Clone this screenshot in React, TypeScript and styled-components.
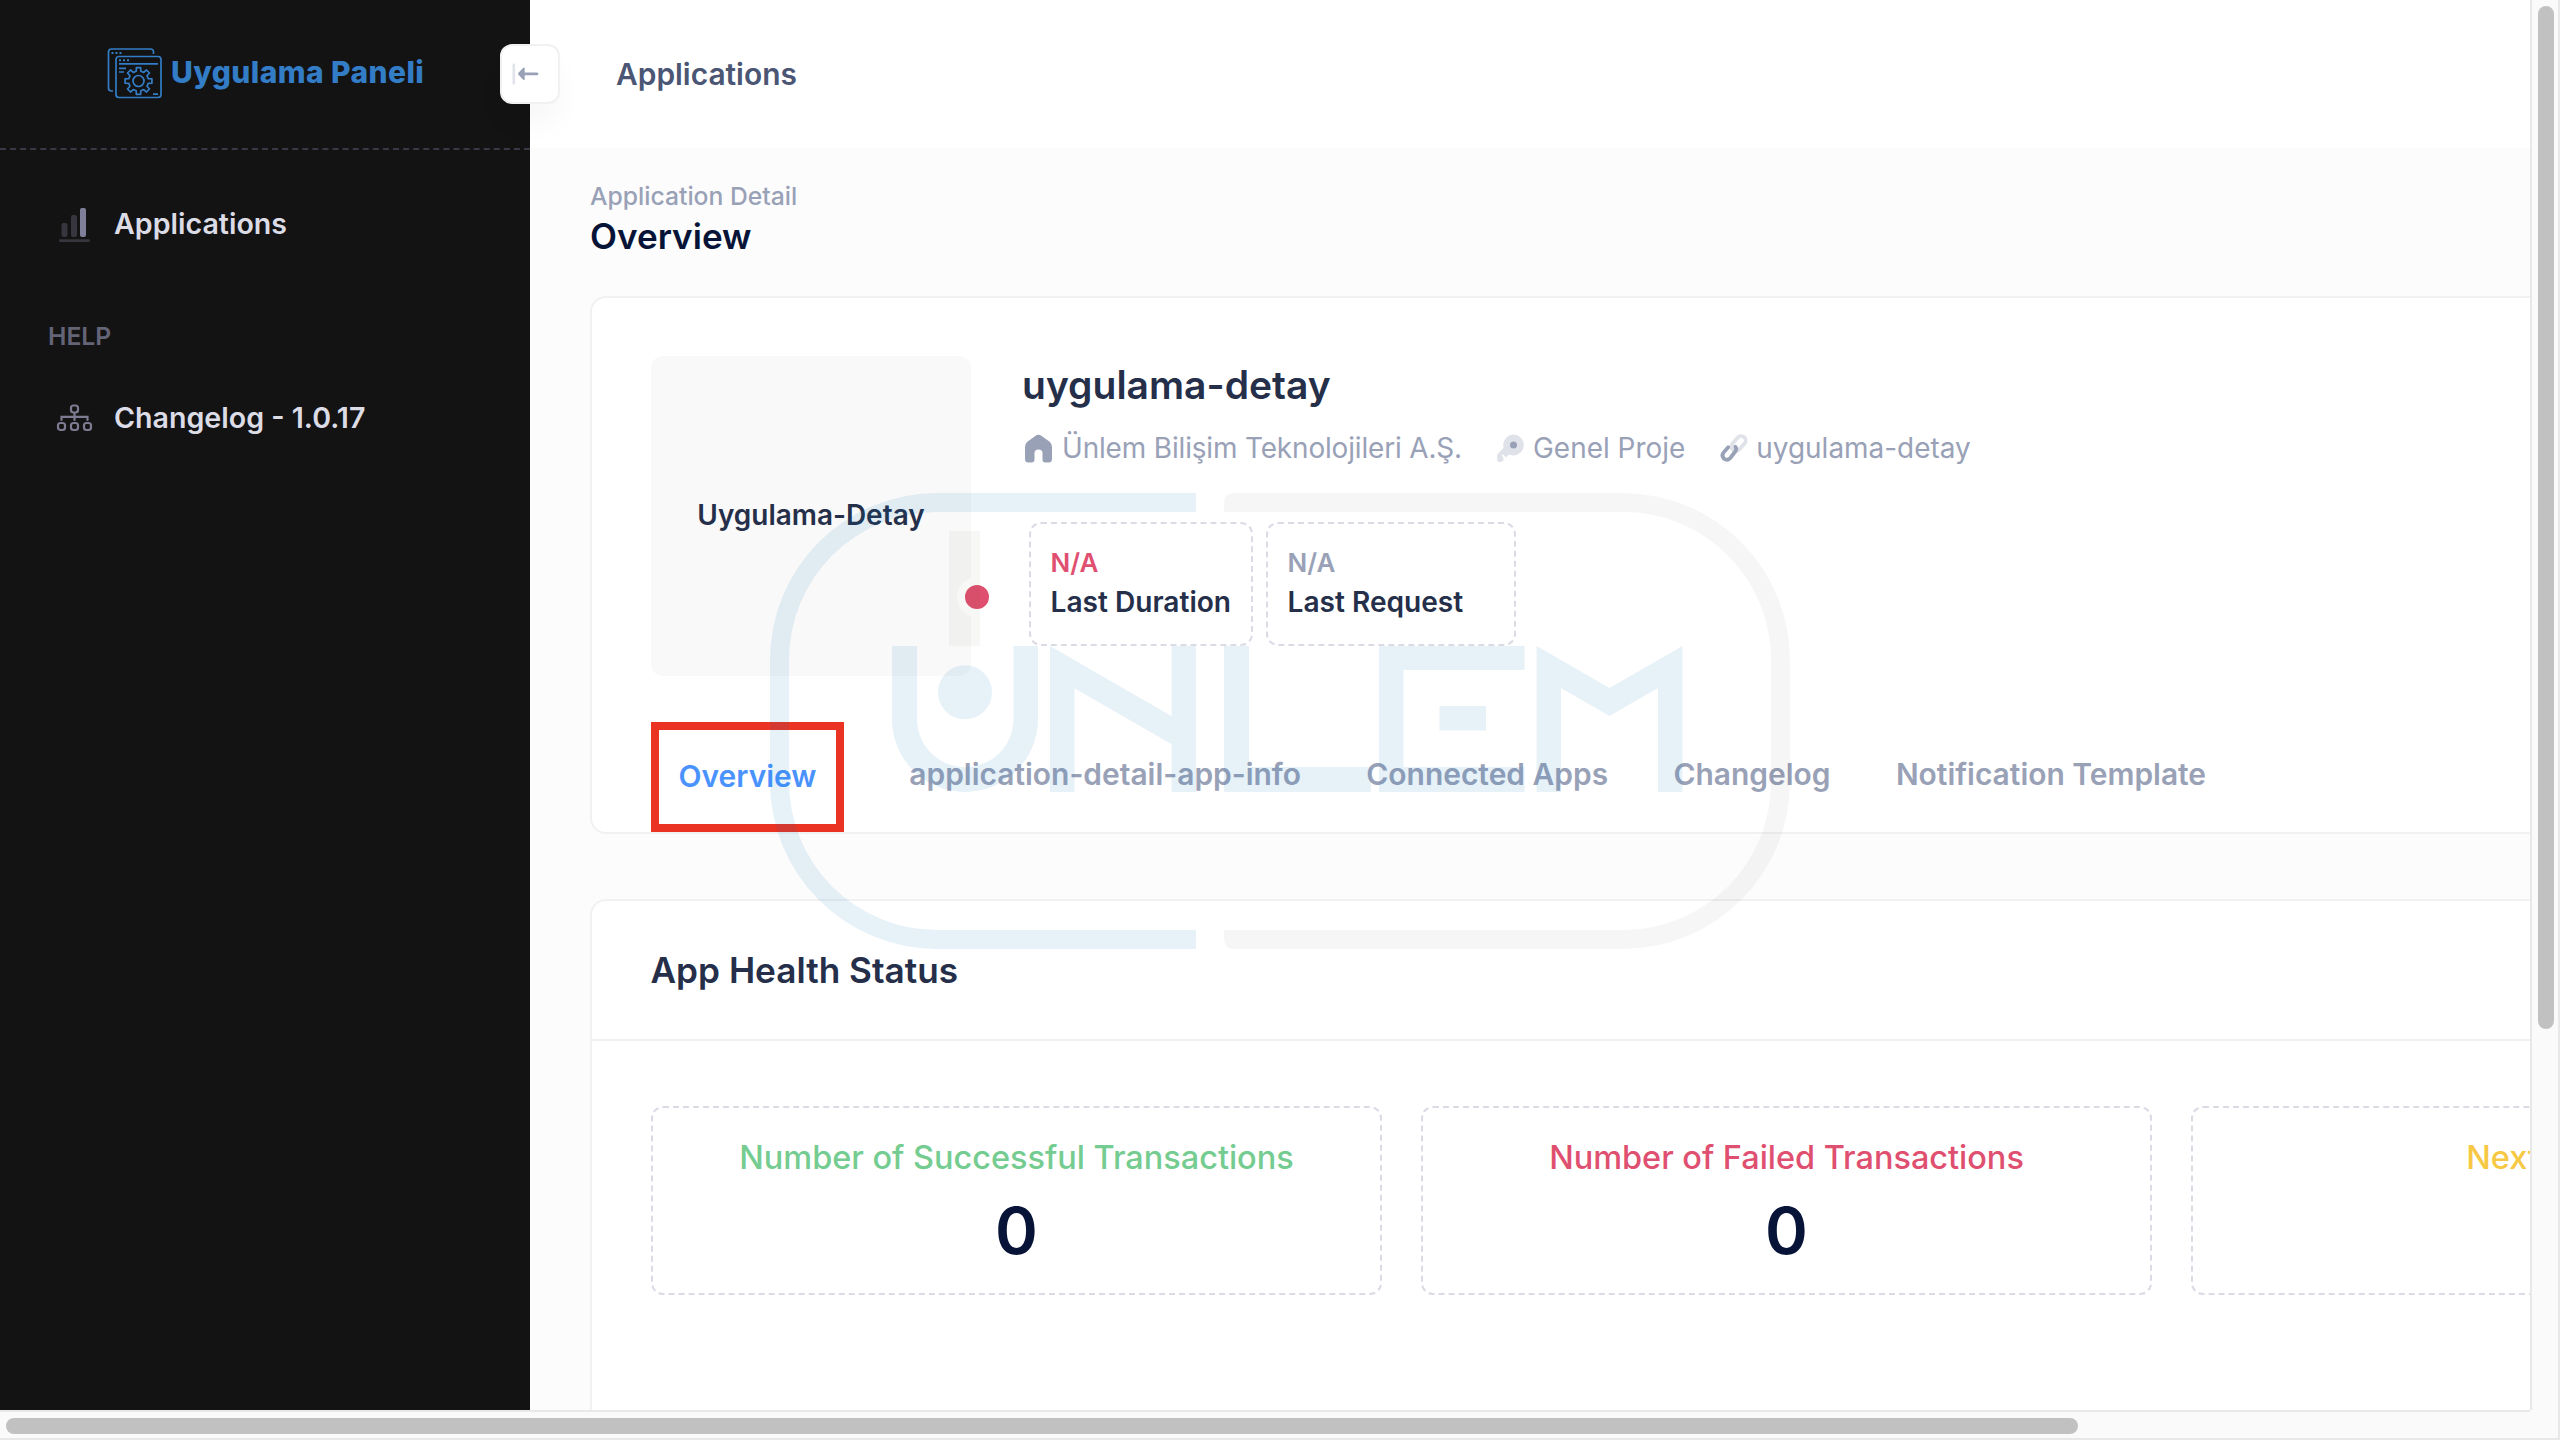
import React from "react";
import styled, { createGlobalStyle, css } from "styled-components";

const GlobalStyle = createGlobalStyle`
  * { box-sizing: border-box; }
  body {
    margin: 0;
    overflow: hidden;
    background: #fafafa;
    font-family: Inter, "Noto Sans", sans-serif;
    -webkit-font-smoothing: antialiased;
  }
`;

const Screen = styled.div`
  display: grid;
  grid-template-columns: 1fr 30px;
  grid-template-rows: 1fr 30px;
  width: 2560px;
  height: 1440px;
  overflow: hidden;
`;

const Viewport = styled.div`
  position: relative;
  display: flex;
  overflow: hidden;
  background: #fcfcfc;
`;

const Sidebar = styled.aside`
  flex: 0 0 530px;
  display: flex;
  flex-direction: column;
  background: #131313;
`;

const Brand = styled.div`
  position: relative;
  height: 150px;
  padding: 0 0 4px 107px;
  display: flex;
  align-items: center;
  gap: 8px;
  border-bottom: 2px dashed #393945;
  color: #337dc6;

  > svg {
    margin-top: 4px;
  }
`;

const BrandName = styled.span`
  font-size: 30px;
  line-height: 40px;
  font-weight: 800;
  letter-spacing: 0.42px;
  white-space: nowrap;
`;

const Toggle = styled.button`
  position: absolute;
  z-index: 2;
  top: 44px;
  right: -30px;
  width: 60px;
  height: 60px;
  padding: 0;
  border: 2px solid #f1f1f2;
  border-radius: 12px;
  background: #fff;
  box-shadow: 0 20px 28px rgba(0, 0, 0, 0.03);
  display: flex;
  align-items: center;
  justify-content: center;
`;

const Nav = styled.nav`
  display: flex;
  flex-direction: column;
  padding: 50px 0 0 50px;
`;

const NavItem = styled.a`
  display: flex;
  align-items: center;
  height: 48px;
  gap: 15px;
  font-size: 28.6px;
  font-weight: 600;
  color: #dcdce6;
  white-space: nowrap;
`;

const NavLabel = styled.span`
  padding-bottom: 2px;
`;

const NavHeading = styled.div`
  height: 48px;
  margin: 64px 0 34px -2px;
  line-height: 48px;
  font-size: 24.7px;
  font-weight: 600;
  color: #646477;
`;

const NavIcon = styled.svg`
  flex: 0 0 49px;
  height: 44px;
`;

const Main = styled.main`
  flex: 1;
  min-width: 0;
  display: flex;
  flex-direction: column;
`;

const Topbar = styled.header`
  flex: 0 0 148px;
  display: flex;
  align-items: center;
  padding-left: 86px;
  background: #fff;
  font-size: 29.9px;
  font-weight: 600;
  color: #4b5675;
`;

const Content = styled.div`
  display: flex;
  flex-direction: column;
  padding: 30px 0 0 60px;
`;

const Crumb = styled.div`
  height: 36px;
  line-height: 36px;
  font-size: 24.7px;
  font-weight: 500;
  color: #99a1b7;
`;

const PageTitle = styled.h1`
  margin: 0;
  height: 46px;
  line-height: 44px;
  font-size: 35.1px;
  font-weight: 600;
  color: #071437;
`;

const Card = styled.section<{ $height: number }>`
  width: 2440px;
  height: ${(p) => p.$height}px;
  border: 2px solid #f1f1f2;
  border-radius: 16px;
  background: #fff;
`;

const DetailCard = styled(Card)`
  margin-top: 36px;
  padding: 58px 0 0 59px;
  display: flex;
  flex-direction: column;
  justify-content: space-between;
`;

const Profile = styled.div`
  display: flex;
  gap: 52px;
`;

const Avatar = styled.div`
  position: relative;
  flex: 0 0 320px;
  height: 320px;
  padding-bottom: 2px;
  display: flex;
  align-items: center;
  justify-content: center;
  border-radius: 12px;
  background: #f9f9f9;
  font-size: 27.95px;
  font-weight: 600;
  color: #252f4a;
`;

const StatusDot = styled.span`
  position: absolute;
  right: -26px;
  bottom: 59px;
  width: 40px;
  height: 40px;
  border: 8px solid #fff;
  border-radius: 50%;
  background: #df5070;
`;

const Info = styled.div`
  display: flex;
  flex-direction: column;
`;

const AppName = styled.h2`
  margin: 3px 0 0 -1px;
  height: 53px;
  line-height: 52px;
  font-size: 39px;
  font-weight: 600;
  color: #252f4a;
`;

const MetaRow = styled.div`
  display: flex;
  align-items: center;
  height: 42px;
  margin-top: 15px;
  gap: 33px;
`;

const Meta = styled.span`
  display: flex;
  align-items: center;
  gap: 7px;
  font-size: 27.95px;
  font-weight: 400;
  color: #99a1b7;
  white-space: nowrap;

  svg {
    flex: none;
    width: 31px;
    height: 31px;
  }

  &:first-child {
    letter-spacing: -0.15px;
    gap: 8px;
  }
`;

const Facts = styled.div`
  display: flex;
  gap: 13px;
  margin: 53px 0 0 6px;
`;

const dashedBox = css`
  border: 2px dashed #dbdbe6;
  border-radius: 12px;
`;

const Fact = styled.div<{ $width: number }>`
  ${dashedBox}
  width: ${(p) => p.$width}px;
  height: 124px;
  padding: 19px 0 0 19.5px;
  white-space: nowrap;
`;

const FactValue = styled.div<{ $color: string }>`
  height: 39px;
  line-height: 39px;
  font-size: 26px;
  font-weight: 600;
  color: ${(p) => p.$color};
`;

const FactLabel = styled.div`
  height: 40px;
  line-height: 41px;
  font-size: 28.1px;
  font-weight: 600;
  color: #252f4a;
`;

const Tabs = styled.div`
  display: flex;
  align-items: center;
  gap: 65.3px;
  height: 110px;
`;

const Tab = styled.a<{ $active?: boolean }>`
  font-size: 29.95px;
  font-weight: 600;
  line-height: 40px;
  white-space: nowrap;
  color: #99a1b7;
  padding-bottom: 6px;

  ${(p) =>
    p.$active &&
    css`
      display: flex;
      align-items: center;
      justify-content: center;
      width: 193px;
      height: 110px;
      padding: 0 0 2px;
      border: 8px solid #ea3323;
      color: #4a93ff;
    `}
`;

const HealthCard = styled(Card)`
  margin-top: 65px;
  border-bottom: 0;
`;

const CardHeader = styled.div`
  height: 140px;
  padding: 0 0 0 58.5px;
  display: flex;
  align-items: center;
  border-bottom: 2px solid #f1f1f2;
  font-size: 35.2px;
  font-weight: 600;
  color: #252f4a;
`;

const StatGrid = styled.div`
  display: grid;
  grid-template-columns: repeat(3, 731px);
  gap: 39px;
  padding: 65px 0 0 59px;
`;

const Stat = styled.div`
  ${dashedBox}
  height: 189px;
  padding-top: 26px;
  text-align: center;
`;

const StatLabel = styled.div<{ $color: string }>`
  height: 48px;
  line-height: 48px;
  font-size: 32.5px;
  font-weight: 500;
  letter-spacing: -0.03px;
  color: ${(p) => p.$color};
`;

const StatValue = styled.div`
  height: 98px;
  line-height: 98px;
  font-size: 65px;
  font-weight: 600;
  color: #071437;
`;

const VTrack = styled.div`
  padding: 6px 4px 0 6px;
  border: solid #e8e8e8;
  border-width: 0 2px;
  background: #fafafa;
`;

const VThumb = styled.div`
  width: 16px;
  height: 1023px;
  border-radius: 8px;
  background: #c1c1c1;
`;

const HTrack = styled.div`
  padding: 6px 0 0 6px;
  border: solid #e8e8e8;
  border-width: 2px 0;
  background: #fafafa;
`;

const HThumb = styled.div`
  width: 2072px;
  height: 16px;
  border-radius: 8px;
  background: #c1c1c1;
`;

const Corner = styled.div`
  border: solid #e8e8e8;
  border-width: 0 2px 2px 0;
  background: #fafafa;
`;

const Watermark = styled.svg`
  position: absolute;
  left: 770px;
  top: 493px;
  width: 1021px;
  height: 457px;
  pointer-events: none;
`;

function gearPath(cx: number, cy: number, teeth: number, outer: number, inner: number) {
  const step = (Math.PI * 2) / teeth;
  const pts: string[] = [];
  for (let i = 0; i < teeth; i++) {
    const a = i * step - Math.PI / 2;
    const corners: [number, number][] = [
      [-0.3, inner],
      [-0.2, outer],
      [0.2, outer],
      [0.3, inner],
    ];
    corners.forEach(([o, r]) => {
      pts.push(`${(cx + r * Math.cos(a + o * step)).toFixed(2)} ${(cy + r * Math.sin(a + o * step)).toFixed(2)}`);
    });
  }
  return `M${pts.join("L")}Z`;
}

const BrandIcon = () => (
  <svg width="56" height="52" viewBox="0 0 56 52" fill="none" stroke="currentColor" strokeWidth="1.7" strokeLinejoin="round">
    <path d="M46.500 6V4q0-3-3-3H4.500q-3 0-3 3V40q0 3 3 3H6" />
    <rect x="9" y="8.500" width="45" height="41" rx="3" />
    <path d="M4.500 5h2m2 0h2m2 0h2M12 12.200h2m2 0h2m2 0h2" strokeWidth="2" />
    <path d="M12 15.800h39M12 20.300h7M12 24h5M46 46.200h5" />
    <path d={gearPath(31.5, 33, 8, 13.6, 10)} />
    <circle cx="31.500" cy="33" r="5.500" />
  </svg>
);

const ToggleIcon = () => (
  <svg width="40" height="40" viewBox="0 0 40 40" fill="#99a1b7">
    <rect x="2.500" y="9.500" width="2.600" height="21" rx="1.300" opacity="0.3" />
    <path d="M8.500 18.800 13 14q1.700-1.400 1.700.8v3.600H27q1.500.2 1.500 1.400T27 21.200H14.700v3.600q0 2.200-1.700.8L8.500 20.800q-.9-1 0-2Z" />
  </svg>
);

const BarsIcon = () => (
  <NavIcon width="49" height="44" viewBox="0 0 49 44">
    <g fill="#37363f">
      <rect x="11.500" y="21" width="6" height="14" rx="2" />
      <rect x="21" y="13" width="6" height="22" rx="2" />
      <rect x="9" y="37.200" width="31" height="2.800" rx="1.400" />
    </g>
    <rect x="30" y="6" width="6" height="29" rx="2" fill="#7f7f99" />
  </NavIcon>
);

const TreeIcon = () => (
  <NavIcon width="49" height="44" viewBox="0 0 49 44" fill="none" stroke="#7c7b91" strokeWidth="2.2">
    <rect x="21" y="9.500" width="7" height="7" rx="2.500" />
    <rect x="8" y="27" width="7" height="7" rx="2.500" />
    <rect x="21" y="27" width="7" height="7" rx="2.500" />
    <rect x="34" y="27" width="7" height="7" rx="2.500" />
    <path d="M24.500 17v7M11.500 24v-3.200h26V24" strokeLinecap="round" />
  </NavIcon>
);

const HomeIcon = () => (
  <svg viewBox="0 0 31 31" fill="#99a1b7">
    <path d="M2 14q0-3 2.300-5.200L12.300 3q3.200-2.400 6.400 0l8 5.800Q29 11 29 14v12q0 3.500-3.500 3.500h-3q-3 0-3-3V20q0-3.500-4-3.500T11.500 20v6.500q0 3-3 3h-3q-3.500 0-3.500-3.500Z" />
  </svg>
);

const KeyIcon = () => (
  <svg viewBox="0 0 31 31">
    <g fill="#e0e2ea">
      <circle cx="18.500" cy="12" r="10.400" />
      <path d="M11 12.500 2.800 20.700q-1.600 2-.3 4l-.3 1.600q-.2 2.600 2.600 2.800 2 .2 3.400-1.500 1-1.600 0-2.800l-1.200-2q-.2-1.600 1.200-1.400l2.600 2.800 7.200-6Z" />
    </g>
    <circle cx="18.500" cy="12" r="3.500" fill="#99a1b7" />
  </svg>
);

const LinkIcon = () => (
  <svg viewBox="0 0 31 31" fill="none" strokeWidth="3.8">
    <rect x="12" y="6" width="17" height="9" rx="4.500" transform="rotate(-48 20.500 10.500)" stroke="#e0e2ea" />
    <path d="M17.300 13.800q2 2.400-.2 5L12.300 25q-3 3.200-6.200.8-3-3-.6-6.200l4.700-5.400" stroke="#99a1b7" strokeLinecap="round" />
  </svg>
);

const UnlemWatermark = () => (
  <Watermark viewBox="770 493 1021 457">
    <g fill="#0074b5" fillOpacity="0.098">
      <path d="M1196 493H937A167 167 0 0 0 770 660V782A167 167 0 0 0 937 949H1196V930H937A148 148 0 0 1 789 782V660A148 148 0 0 1 937 512H1196Z" />
      <path d="M892 646H917V719A48 48 0 0 0 1013.500 719V646H1038V719A73 73 0 0 1 892 719Z" />
      <circle cx="965" cy="692.300" r="27" />
      <path d="M1050 646 1171.700 716.300V646H1196V792H1171.700V744.300L1074.500 688.300V792H1050Z" />
      <path d="M1224 646H1249V767H1371V792H1224Z" />
      <path d="M1379 646H1524.500V670H1403.500V767H1524.500V792H1379Z" />
      <rect x="1439.500" y="706" width="46.500" height="24.500" />
      <path d="M1536.600 646 1609.500 688 1682.500 646V792H1658V688L1609.500 716 1561 688V792H1536.600Z" />
    </g>
    <g fill="#000" fillOpacity="0.034">
      <path d="M1234 493H1624A167 167 0 0 1 1790 660V782A167 167 0 0 1 1624 949H1234Q1224 949 1224 939V930H1624A148 148 0 0 0 1771 782V660A148 148 0 0 0 1624 512H1224V503Q1224 493 1234 493Z" />
    </g>
    <rect x="949" y="531" width="31" height="115" fill="#504a20" fillOpacity="0.042" />
  </Watermark>
);

const stats = [
  { label: "Number of Successful Transactions", value: "0", color: "#75cc90" },
  { label: "Number of Failed Transactions", value: "0", color: "#df5070" },
  { label: "Next Check", value: "", color: "#f6c843" },
];

const tabs = ["application-detail-app-info", "Connected Apps", "Changelog", "Notification Template"];

export default function App() {
  return (
    <>
      <GlobalStyle />
      <Screen>
        <Viewport>
          <Sidebar>
            <Brand>
              <BrandIcon />
              <BrandName>Uygulama Paneli</BrandName>
              <Toggle aria-label="Toggle sidebar">
                <ToggleIcon />
              </Toggle>
            </Brand>
            <Nav>
              <NavItem>
                <BarsIcon />
                <NavLabel>Applications</NavLabel>
              </NavItem>
              <NavHeading>HELP</NavHeading>
              <NavItem>
                <TreeIcon />
                <NavLabel>Changelog - 1.0.17</NavLabel>
              </NavItem>
            </Nav>
          </Sidebar>
          <Main>
            <Topbar>Applications</Topbar>
            <Content>
              <Crumb>Application Detail</Crumb>
              <PageTitle>Overview</PageTitle>
              <DetailCard $height={538}>
                <Profile>
                  <Avatar>
                    Uygulama-Detay
                    <StatusDot />
                  </Avatar>
                  <Info>
                    <AppName>uygulama-detay</AppName>
                    <MetaRow>
                      <Meta>
                        <HomeIcon />
                        Ünlem Bilişim Teknolojileri A.Ş.
                      </Meta>
                      <Meta>
                        <KeyIcon />
                        Genel Proje
                      </Meta>
                      <Meta>
                        <LinkIcon />
                        uygulama-detay
                      </Meta>
                    </MetaRow>
                    <Facts>
                      <Fact $width={224}>
                        <FactValue $color="#df5070">N/A</FactValue>
                        <FactLabel>Last Duration</FactLabel>
                      </Fact>
                      <Fact $width={250}>
                        <FactValue $color="#99a1b7">N/A</FactValue>
                        <FactLabel>Last Request</FactLabel>
                      </Fact>
                    </Facts>
                  </Info>
                </Profile>
                <Tabs>
                  <Tab $active>Overview</Tab>
                  {tabs.map((t) => (
                    <Tab key={t}>{t}</Tab>
                  ))}
                </Tabs>
              </DetailCard>
              <HealthCard $height={700}>
                <CardHeader>App Health Status</CardHeader>
                <StatGrid>
                  {stats.map((s) => (
                    <Stat key={s.label}>
                      <StatLabel $color={s.color}>{s.label}</StatLabel>
                      <StatValue>{s.value}</StatValue>
                    </Stat>
                  ))}
                </StatGrid>
              </HealthCard>
            </Content>
          </Main>
          <UnlemWatermark />
        </Viewport>
        <VTrack>
          <VThumb />
        </VTrack>
        <HTrack>
          <HThumb />
        </HTrack>
        <Corner />
      </Screen>
    </>
  );
}
